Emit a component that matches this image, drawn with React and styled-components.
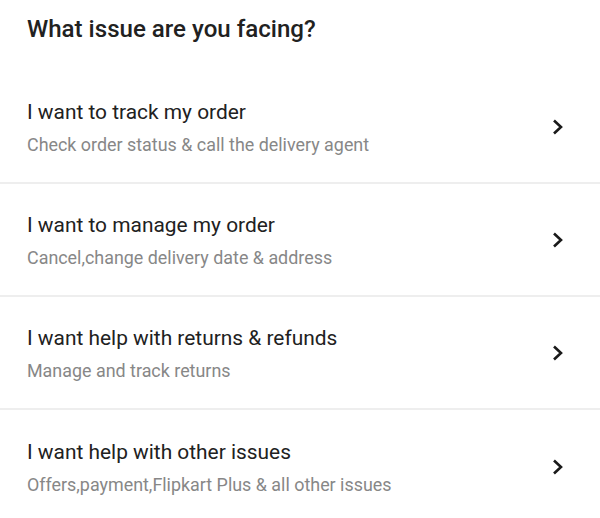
import React from "react";
import styled, { createGlobalStyle } from "styled-components";

const Global = createGlobalStyle`
  html, body { margin: 0; padding: 0; background: #fff; }
  body { font-family: Roboto, "Liberation Sans", Arial, sans-serif; }
`;

const Page = styled.div`
  width: 600px;
  background: #fff;
`;

const Header = styled.h1`
  margin: 0;
  height: 71px;
  box-sizing: border-box;
  padding: 14px 0 0 27px;
  font-size: 24.1px;
  font-weight: 500;
  color: #212121;
  line-height: 30px;
`;

const List = styled.div`
  display: flex;
  flex-direction: column;
`;

const Row = styled.div`
  height: 113px;
  box-sizing: border-box;
  display: flex;
  align-items: center;
  padding: 0 35px 0 27px;
  border-bottom: ${(p) => (p.$last ? "none" : "2px solid #eeeeee")};
`;

const Texts = styled.div`
  flex: 1;
  display: flex;
  flex-direction: column;
  gap: 10px;
  padding-top: 3px;
`;

const Title = styled.div`
  font-size: 20.9px;
  color: #212121;
  line-height: 24px;
`;

const Sub = styled.div`
  font-size: 17.9px;
  color: #878787;
  line-height: 22px;
`;

const Chevron = styled.svg`
  width: 14px;
  height: 16px;
  flex: none;
`;

const items = [
  ["I want to track my order", "Check order status & call the delivery agent"],
  ["I want to manage my order", "Cancel,change delivery date & address"],
  ["I want help with returns & refunds", "Manage and track returns"],
  ["I want help with other issues", "Offers,payment,Flipkart Plus & all other issues"],
];

export default function App() {
  return (
    <Page>
      <Global />
      <Header>What issue are you facing?</Header>
      <List>
        {items.map(([t, s], i) => (
          <Row key={t} $last={i === items.length - 1}>
            <Texts>
              <Title>{t}</Title>
              <Sub>{s}</Sub>
            </Texts>
            <Chevron viewBox="0 0 14 16">
              <path d="M3 1.5 L10 8 L3 14.5" fill="none" stroke="#1a1a1a" strokeWidth="2.6" />
            </Chevron>
          </Row>
        ))}
      </List>
    </Page>
  );
}
